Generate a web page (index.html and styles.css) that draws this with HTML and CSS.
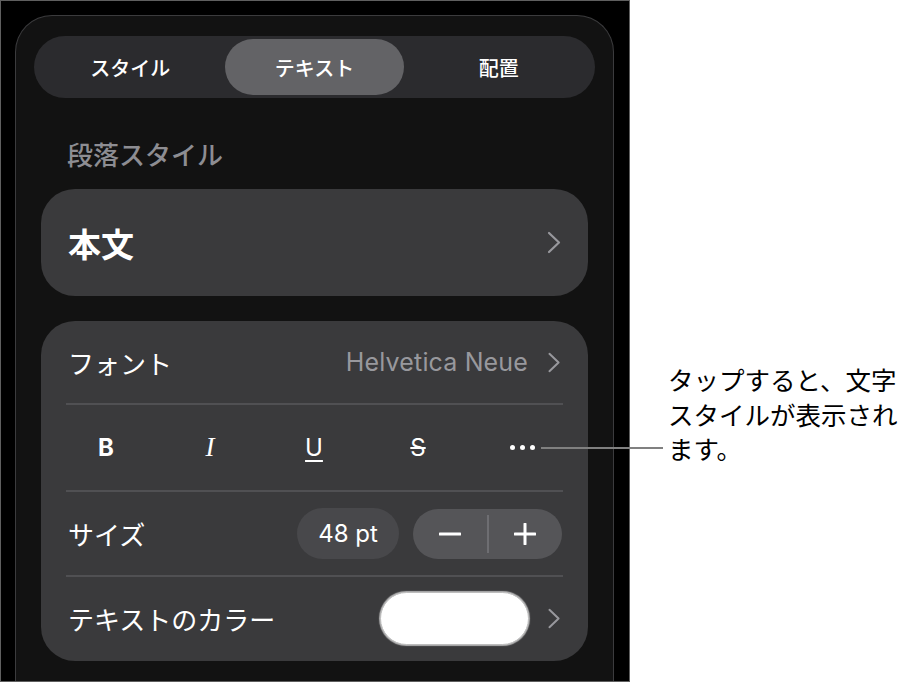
FILE: index.html
```html
<!DOCTYPE html>
<html lang="ja">
<head>
<meta charset="utf-8">
<title>テキスト</title>
<link rel="stylesheet" href="styles.css">
</head>
<body>
<div class="page">
  <div class="device">
    <div class="panel">
      <div class="segmented">
        <div class="seg">スタイル</div>
        <div class="seg active">テキスト</div>
        <div class="seg">配置</div>
      </div>

      <div class="section-label">段落スタイル</div>

      <div class="card style-card">
        <span class="style-name">本文</span>
        <svg class="chev" viewBox="0 0 14 23" width="14" height="23"><polyline points="2,2 12,11.5 2,21" /></svg>
      </div>

      <div class="card settings">
        <div class="row font-row">
          <span class="label">フォント</span>
          <span class="value">Helvetica Neue</span>
          <svg class="chev" viewBox="0 0 14 23" width="14" height="21"><polyline points="2,2 12,11.5 2,21" /></svg>
        </div>
        <div class="sep"></div>
        <div class="row format-row">
          <span class="fmt bold">B</span>
          <span class="fmt italic">I</span>
          <span class="fmt underline">U</span>
          <span class="fmt strike">S</span>
          <span class="fmt more"><i></i><i></i><i></i></span>
        </div>
        <div class="sep"></div>
        <div class="row size-row">
          <span class="label">サイズ</span>
          <span class="size-pill">48 pt</span>
          <div class="stepper">
            <span class="step">
              <svg viewBox="0 0 22 22" width="22" height="22"><line x1="1" y1="11" x2="21" y2="11" /></svg>
            </span>
            <span class="step-div"></span>
            <span class="step">
              <svg viewBox="0 0 22 22" width="22" height="22"><line x1="1" y1="11" x2="21" y2="11" /><line x1="11" y1="1" x2="11" y2="21" /></svg>
            </span>
          </div>
        </div>
        <div class="sep"></div>
        <div class="row color-row">
          <span class="label">テキストのカラー</span>
          <span class="swatch"></span>
          <svg class="chev" viewBox="0 0 14 23" width="14" height="21"><polyline points="2,2 12,11.5 2,21" /></svg>
        </div>
      </div>
    </div>
  </div>

  <div class="callout">タップすると、文字<br>スタイルが表示され<br>ます。</div>
  <div class="leader"></div>
</div>
</body>
</html>
```

FILE: styles.css
```css
* {
  box-sizing: border-box;
}

html, body {
  margin: 0;
  padding: 0;
  background: #ffffff;
}

body {
  font-family: Inter, "Noto Sans CJK JP", "Noto Sans", sans-serif;
}

.page {
  position: relative;
  display: flex;
  align-items: flex-start;
  width: 907px;
  height: 684px;
}

.device {
  width: 630px;
  height: 682px;
  background: #000000;
  border: 1px solid #5f5f5f;
  padding: 14px 15px 0 14px;
  display: flex;
  flex-direction: column;
}

.panel {
  flex: 1;
  background: #121212;
  border: 1px solid #3b3b3d;
  border-bottom: none;
  border-radius: 37px 37px 0 0;
  display: flex;
  flex-direction: column;
  padding: 20px 17px 0 25px;
}

/* Segmented control */
.segmented {
  margin-left: -7px;
  width: 561px;
  height: 62px;
  border-radius: 31px;
  background: #2b2b2e;
  padding: 3px 4px;
  display: grid;
  grid-template-columns: repeat(3, 1fr);
}

.seg {
  display: flex;
  align-items: center;
  justify-content: center;
  color: #ffffff;
  font-family: "Noto Sans CJK JP", sans-serif;
  font-size: 20px;
  font-weight: 500;
  border-radius: 28px;
}

.seg.active {
  background: #636366;
  margin: 0 3px;
}

/* Section label */
.section-label {
  margin-top: 41px;
  margin-bottom: 20px;
  padding-left: 26px;
  height: 30px;
  line-height: 30px;
  color: #8d8d92;
  font-family: "Noto Sans CJK JP", sans-serif;
  font-size: 26px;
  font-weight: 500;
}

/* Cards */
.card {
  width: 547px;
  background: #3a3a3c;
  border-radius: 34px;
}

.style-card {
  height: 107px;
  display: flex;
  align-items: center;
  justify-content: space-between;
  padding: 0 27px;
}

.style-name {
  color: #ffffff;
  font-family: "Noto Sans CJK JP", sans-serif;
  font-size: 33px;
  font-weight: 700;
}

.chev {
  display: block;
  flex: none;
}

.chev polyline {
  fill: none;
  stroke: #98989d;
  stroke-width: 2.2;
  stroke-linecap: round;
  stroke-linejoin: round;
}

.settings {
  margin-top: 25px;
  height: 340px;
  padding: 0 25px;
  display: flex;
  flex-direction: column;
}

.sep {
  height: 2px;
  background: #505053;
  flex: none;
}

.row {
  display: flex;
  align-items: center;
  padding: 0 2px;
  flex: none;
}

.label {
  color: #ffffff;
  font-family: "Noto Sans CJK JP", sans-serif;
  font-size: 26px;
  font-weight: 400;
}

.font-row {
  height: 82px;
}

.font-row .label {
  margin-right: auto;
}

.value {
  color: #98989d;
  font-family: Inter, "Liberation Sans", sans-serif;
  font-size: 25px;
  letter-spacing: 0.15px;
  margin-right: 19px;
}

.format-row {
  height: 85px;
  margin: 0 -11px 0 -12px;
  padding: 0;
  display: grid;
  grid-template-columns: repeat(5, 1fr);
  align-items: center;
  justify-items: center;
}

.fmt {
  color: #ffffff;
  line-height: 1;
}

.bold {
  font-family: Inter, "Liberation Sans", sans-serif;
  font-weight: 700;
  font-size: 24px;
}

.italic {
  font-family: "Liberation Serif", serif;
  font-style: italic;
  font-size: 27px;
}

.underline {
  font-family: Inter, "Liberation Sans", sans-serif;
  font-size: 24px;
  text-decoration: underline;
  text-decoration-thickness: 2px;
  text-underline-offset: 4px;
}

.strike {
  font-family: Inter, "Liberation Sans", sans-serif;
  font-size: 24px;
  text-decoration: line-through;
  text-decoration-thickness: 2px;
}

.more {
  display: flex;
  gap: 5px;
}

.more i {
  display: block;
  width: 5px;
  height: 5px;
  border-radius: 50%;
  background: #ffffff;
}

.size-row {
  height: 83px;
}

.size-row .label {
  margin-right: auto;
}

.size-pill {
  width: 102px;
  height: 51px;
  border-radius: 26px;
  background: #48484b;
  color: #ffffff;
  font-family: Inter, "Liberation Sans", sans-serif;
  font-size: 24px;
  display: flex;
  align-items: center;
  justify-content: center;
  margin-right: 14px;
}

.stepper {
  width: 149px;
  height: 50px;
  border-radius: 25px;
  background: #555558;
  display: flex;
  align-items: center;
  margin-right: -1px;
}

.step {
  flex: 1;
  display: flex;
  align-items: center;
  justify-content: center;
}

.step svg line {
  stroke: #ffffff;
  stroke-width: 3;
  stroke-linecap: round;
}

.step-div {
  width: 2px;
  height: 38px;
  background: #6e6e72;
}

.color-row {
  height: 83px;
}

.color-row .label {
  margin-right: auto;
}

.swatch {
  width: 149px;
  height: 53px;
  border-radius: 27px;
  background: #ffffff;
  border: 1px solid #bdbdbd;
  box-shadow: 0 0 1px 1px rgba(255, 255, 255, 0.6);
  margin-right: 18px;
}

/* Callout */
.callout {
  margin-left: 38px;
  margin-top: 362px;
  color: #000000;
  font-family: "Noto Sans CJK JP", sans-serif;
  font-size: 25.5px;
  line-height: 34.5px;
  white-space: nowrap;
}

.leader {
  position: absolute;
  left: 541px;
  top: 447px;
  width: 122px;
  height: 2px;
  background: #808080;
}
```
